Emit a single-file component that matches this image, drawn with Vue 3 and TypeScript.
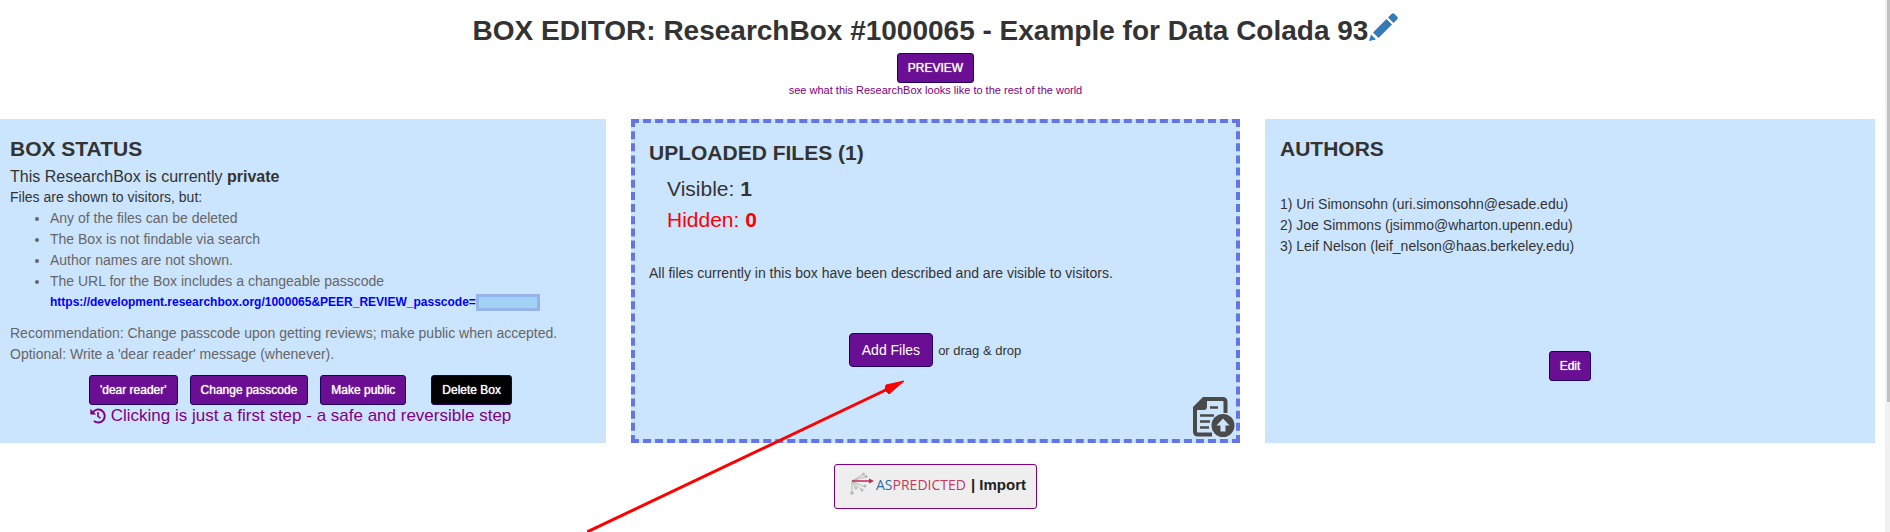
<script setup lang="ts">
const rules: string[] = [
  'Any of the files can be deleted',
  'The Box is not findable via search',
  'Author names are not shown.',
]

const authors: { name: string; email: string }[] = [
  { name: 'Uri Simonsohn', email: 'uri.simonsohn@esade.edu' },
  { name: 'Joe Simmons', email: 'jsimmo@wharton.upenn.edu' },
  { name: 'Leif Nelson', email: 'leif_nelson@haas.berkeley.edu' },
]
</script>

<template>
  <div class="shell">
    <main class="page">
      <header class="head">
        <h1>
          <span>BOX EDITOR: ResearchBox #1000065 - Example for Data Colada 93</span>
          <a href="#" class="edit-title" aria-label="Edit title">
            <svg width="30" height="30" viewBox="0 0 30 30" fill="#337ab7">
              <path d="M1 29 3 22.500 8 27.500Z" />
              <path d="M5 20.500 18.500 7 24 12.500 10.500 26Z" />
              <path d="M20 5.500 23.500 2q1.500-1.500 3 0l2.500 2.500q1.500 1.500 0 3L25.500 11Z" />
            </svg>
          </a>
        </h1>
        <button type="button" class="btn">PREVIEW</button>
        <p class="hint">see what this ResearchBox looks like to the rest of the world</p>
      </header>

      <div class="cards">
        <section class="card status">
          <h2>BOX STATUS</h2>
          <p class="lead">This ResearchBox is currently <b>private</b></p>
          <p>Files are shown to visitors, but:</p>
          <ul class="muted">
            <li v-for="rule in rules" :key="rule">{{ rule }}</li>
            <li>
              The URL for the Box includes a changeable passcode
              <span class="url">
                <a href="#">https://development.researchbox.org/1000065&amp;PEER_REVIEW_passcode=</a>
                <i class="mask"></i>
              </span>
            </li>
          </ul>
          <p class="muted">Recommendation: Change passcode upon getting reviews; make public when accepted.</p>
          <p class="muted">Optional: Write a 'dear reader' message (whenever).</p>
          <div class="actions">
            <button type="button" class="btn">'dear reader'</button>
            <button type="button" class="btn">Change passcode</button>
            <button type="button" class="btn">Make public</button>
            <button type="button" class="btn danger">Delete Box</button>
          </div>
          <p class="safe">
            <svg width="16" height="16" viewBox="0 0 512 512" fill="none" stroke="#800080" stroke-width="62">
              <path d="M84 150A208 208 0 1 1 124 412" />
              <path d="M256 130V268L336 322" stroke-width="52" />
              <path d="M10 20V210H200Z" fill="#800080" stroke="none" />
            </svg>
            <span>Clicking is just a first step - a safe and reversible step</span>
          </p>
        </section>

        <section class="card files">
          <h2>UPLOADED FILES (1)</h2>
          <div class="counts">
            <p>Visible: <b>1</b></p>
            <p class="hidden-count">Hidden: <b>0</b></p>
          </div>
          <p>All files currently in this box have been described and are visible to visitors.</p>
          <div class="add">
            <button type="button" class="btn large">Add Files</button>
            <span>or drag &amp; drop</span>
          </div>
          <svg class="upload" width="42" height="40" viewBox="0 0 42 40">
            <path d="M11 2H29.500Q32.500 2 32.500 5V16M19 37.500H5Q2 37.500 2 34.500V11" fill="none" stroke="#4a4a4a" stroke-width="4" />
            <path d="M0 13V10L10 0H14V9.500Q14 13 10.500 13Z" fill="#4a4a4a" />
            <path d="M17 10.500H25M7 18.500H21M7 24.500H17M7 30.500H16" stroke="#4a4a4a" stroke-width="2.500" />
            <circle cx="30" cy="28.500" r="11.500" fill="#4a4a4a" />
            <path d="M30 21.500 36.500 28.500H32.500V34.500H27.500V28.500H23.500Z" fill="#cce5ff" />
          </svg>
        </section>

        <section class="card authors">
          <h2>AUTHORS</h2>
          <div class="people">
            <p v-for="(author, index) in authors" :key="author.email">
              {{ index + 1 }}) {{ author.name }} ({{ author.email }})
            </p>
          </div>
          <button type="button" class="btn">Edit</button>
        </section>
      </div>

      <button type="button" class="import">
        <svg width="24" height="24" viewBox="0 0 24 24" fill="none" stroke="#b5bab5">
          <path d="M2 9 14 2M2 9 17 4M2 9V21M2 9 6 17M2 9 12 18M2 9 15 15" />
          <g fill="#b5bab5" stroke="none">
            <circle cx="13.500" cy="2" r="1.500" />
            <circle cx="16" cy="4.500" r="1.500" />
            <circle cx="15" cy="14" r="1.500" />
            <circle cx="12" cy="18" r="1.500" />
            <circle cx="6" cy="16" r="1.500" />
            <circle cx="2" cy="21" r="1.800" />
          </g>
          <path d="M2 9H20" stroke="#c02850" stroke-width="1.500" />
          <path d="M19 6.500 24 9 19 11.500Z" fill="#c02850" stroke="none" />
        </svg>
        <span class="brand"><span>AS</span>PREDICTED</span>
        <b>| Import</b>
      </button>
    </main>

    <div class="scrollbar"><div class="thumb"></div></div>

    <svg class="pointer" width="318" height="154" viewBox="0 0 318 154" aria-hidden="true">
      <path d="M0 152 305 7" stroke="#f00" stroke-width="3" />
      <path d="M317 1 302 14 298 10 299 5Z" fill="#f00" stroke="#f00" />
    </svg>
  </div>
</template>

<style>
body {
  margin: 0;
  background: #fff;
}
</style>

<style scoped>
.shell {
  position: relative;
  display: flex;
  min-height: 100vh;
  overflow: hidden;
  font: 14px/21px "Liberation Sans", Arial, sans-serif;
  color: #333;
}
.page {
  flex: 1;
  display: flex;
  flex-direction: column;
  align-items: center;
  padding: 12px 14px 0 0;
}
h1,
h2,
p,
ul {
  margin: 0;
}
.head {
  display: flex;
  flex-direction: column;
  align-items: center;
  height: 107px;
}
h1 {
  display: flex;
  font-size: 28px;
  line-height: 38px;
  margin-bottom: 3px;
}
.edit-title {
  height: 30px;
}
.edit-title svg {
  display: block;
}
h2 {
  font-size: 21px;
  line-height: 24px;
}
.btn {
  padding: 5px 10px;
  font: 12px/18px "Liberation Sans", Arial, sans-serif;
  color: #fff;
  text-shadow: 0 0 1px #fff;
  background: #6a0f93;
  border: 1px solid #1c0062;
  border-radius: 3px;
}
.btn.large {
  padding: 6px 12px;
  font-size: 14px;
  line-height: 20px;
  text-shadow: none;
  border-radius: 4px;
}
.btn.danger {
  margin-left: 13px;
  background: #000;
}
.hint {
  font-size: 11px;
  line-height: 14px;
  color: #800080;
}
.cards {
  align-self: stretch;
  display: grid;
  grid-template-columns: 606fr 609fr 610fr;
  gap: 25px;
  margin-right: -4px;
}
.card {
  position: relative;
  box-sizing: border-box;
  min-height: 324px;
  background: #cce5ff;
  padding: 18px 15px 10px;
}
.status {
  padding-left: 10px;
}
.lead {
  margin-top: 5px;
  font-size: 16px;
}
.muted {
  color: #666;
}
ul {
  padding-left: 40px;
  margin-bottom: 10px;
}
.url {
  display: flex;
  align-items: center;
}
.url a {
  font-size: 12px;
  font-weight: bold;
  color: #00f;
  text-decoration: none;
}
.mask {
  box-sizing: border-box;
  width: 64px;
  height: 17px;
  background: #a3d2f7;
  border: 3px solid #94b4ea;
}
.actions {
  display: flex;
  justify-content: center;
  gap: 12px;
  margin-top: 10px;
}
.safe {
  display: flex;
  justify-content: center;
  align-items: center;
  gap: 5px;
  font-size: 17px;
  color: #800080;
}
.files {
  border: 4px dashed #6475e8;
  padding-left: 14px;
}
.counts {
  margin: 8px 0 28px;
  padding-left: 18px;
  font-size: 21px;
  line-height: 31px;
}
.hidden-count {
  color: #f00;
}
.add {
  display: flex;
  justify-content: center;
  align-items: center;
  gap: 5px;
  margin-top: 49px;
  font-size: 13px;
}
.upload {
  position: absolute;
  right: 1px;
  bottom: 2px;
}
.authors {
  display: flex;
  flex-direction: column;
}
.authors .btn {
  align-self: center;
}
.people {
  margin: 33px 0 94px;
}
.import {
  display: flex;
  align-items: center;
  margin-top: 21px;
  padding: 7px 10px 12px 15px;
  font: 15px/21px "Liberation Sans", Arial, sans-serif;
  color: #222;
  background: #eee;
  border: 1px solid #800080;
  border-radius: 3px;
}
.brand {
  margin: 0 5px 0 2px;
  font: 14px/21px "Open Sans", sans-serif;
  color: #c23a60;
}
.brand span {
  color: #2f6ea5;
}
.scrollbar {
  width: 5px;
  background: #f1f1f1;
}
.thumb {
  height: 402px;
  margin-left: 2px;
  background: #c1c1c1;
}
.pointer {
  position: absolute;
  left: 587px;
  top: 380px;
  pointer-events: none;
}
</style>
